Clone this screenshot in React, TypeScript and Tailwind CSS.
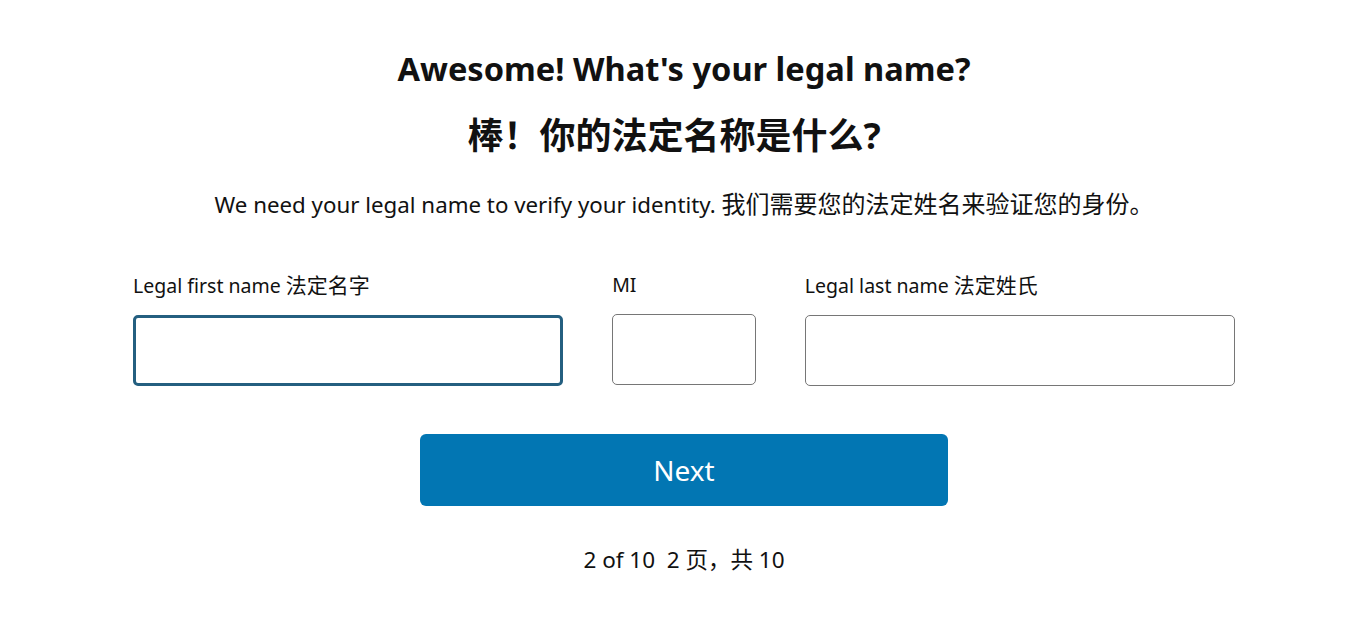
import React from "react";

const font = { fontFamily: '"Noto Sans", "Noto Sans CJK SC", sans-serif' };

export default function App() {
  return (
    <div className="min-h-[620px] w-full bg-white text-[#111111]" style={font}>
      <div className="mx-auto flex w-[1102px] translate-x-[5px] flex-col items-center pt-[45px]">
        <h1 className="text-[32.6px] font-bold leading-[48px]">Awesome! What's your legal name?</h1>
        <h2 className="mr-[20px] mt-[19px] text-[36px] font-bold leading-[48px]">棒！你的法定名称是什么?</h2>
        <p className="mt-[28px] text-[22.3px] leading-[32px]">
          We need your legal name to verify your identity. <span className="text-[24px]">我们需要您的法定姓名来验证您的身份。</span>
        </p>
        <div className="mt-[50px] flex w-full gap-[49px]">
          <div className="flex w-[431px] flex-col">
            <label className="text-[19.5px] leading-[28px]">
              Legal first name <span className="text-[21px]">法定名字</span>
            </label>
            <div className="mt-[15px] h-[71px] rounded-[5px] border-[3px] border-[#245f80]" />
          </div>
          <div className="flex w-[144px] flex-col">
            <label className="text-[19.5px] leading-[28px]">MI</label>
            <div className="mt-[15px] h-[71px] rounded-[5px] border border-[#767676]" />
          </div>
          <div className="flex w-[431px] flex-col">
            <label className="text-[19.5px] leading-[28px]">
              Legal last name <span className="text-[21px]">法定姓氏</span>
            </label>
            <div className="mt-[15px] h-[71px] rounded-[5px] border border-[#767676]" />
          </div>
        </div>
        <button className="mt-[48px] flex h-[72px] w-[528px] items-center justify-center rounded-[6px] bg-[#0276b3] text-[28px] text-white">
          Next
        </button>
        <p className="mt-[38px] text-[22.5px] leading-[32px]">2 of 10&nbsp; 2 页，共 10</p>
      </div>
    </div>
  );
}
